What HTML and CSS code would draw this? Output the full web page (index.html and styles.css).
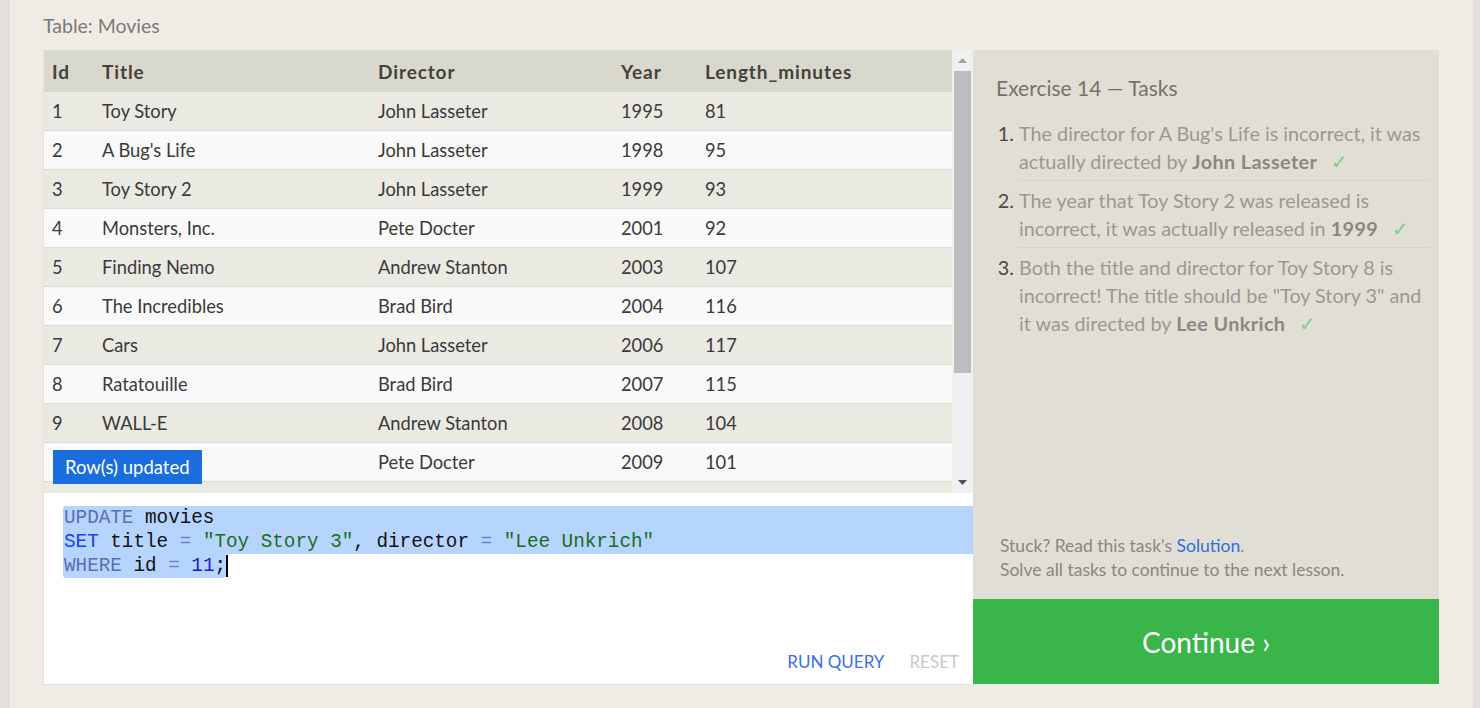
FILE: index.html
```html
<!DOCTYPE html>
<html>
<head>
<meta charset="utf-8">
<link rel="stylesheet" href="styles.css">
</head>
<body>
<div class="page">
  <h2 class="table-title">Table: Movies</h2>
  <div class="main">
    <div class="left">
      <div class="table-view">
        <div class="table-clip">
          <table class="movies">
            <colgroup>
              <col class="c-id"><col class="c-title"><col class="c-dir"><col class="c-year"><col class="c-len">
            </colgroup>
            <thead>
              <tr><th>Id</th><th>Title</th><th>Director</th><th>Year</th><th>Length_minutes</th></tr>
            </thead>
            <tbody>
              <tr><td>1</td><td>Toy Story</td><td>John Lasseter</td><td>1995</td><td>81</td></tr>
              <tr><td>2</td><td>A Bug's Life</td><td>John Lasseter</td><td>1998</td><td>95</td></tr>
              <tr><td>3</td><td>Toy Story 2</td><td>John Lasseter</td><td>1999</td><td>93</td></tr>
              <tr><td>4</td><td>Monsters, Inc.</td><td>Pete Docter</td><td>2001</td><td>92</td></tr>
              <tr><td>5</td><td>Finding Nemo</td><td>Andrew Stanton</td><td>2003</td><td>107</td></tr>
              <tr><td>6</td><td>The Incredibles</td><td>Brad Bird</td><td>2004</td><td>116</td></tr>
              <tr><td>7</td><td>Cars</td><td>John Lasseter</td><td>2006</td><td>117</td></tr>
              <tr><td>8</td><td>Ratatouille</td><td>Brad Bird</td><td>2007</td><td>115</td></tr>
              <tr><td>9</td><td>WALL-E</td><td>Andrew Stanton</td><td>2008</td><td>104</td></tr>
              <tr><td>10</td><td>Up</td><td>Pete Docter</td><td>2009</td><td>101</td></tr>
              <tr class="peek"><td></td><td></td><td></td><td></td><td></td></tr>
            </tbody>
          </table>
        </div>
        <div class="scrollbar">
          <div class="sb-btn"><svg width="9" height="5" viewBox="0 0 9 5"><path d="M0 5 L4.5 0 L9 5 Z" fill="#a3a3a3"/></svg></div>
          <div class="sb-track"><div class="sb-thumb"></div></div>
          <div class="sb-btn"><svg width="9" height="5" viewBox="0 0 9 5"><path d="M0 0 L9 0 L4.5 5 Z" fill="#505050"/></svg></div>
        </div>
        <div class="toast">Row(s) updated</div>
      </div>
      <div class="editor">
        <div class="code">
          <div class="line sel sel-first"><span class="kw-a">UPDATE</span> movies</div>
          <div class="line sel"><span class="kw-b">SET</span> title <span class="op">=</span> <span class="str">"Toy Story 3"</span>, director <span class="op">=</span> <span class="str">"Lee Unkrich"</span></div>
          <div class="line"><span class="sel-part"><span class="kw-a">WHERE</span> id <span class="op">=</span> <span class="num">11</span>;</span><span class="cursor"></span></div>
        </div>
        <div class="actions">
          <span class="run">RUN QUERY</span>
          <span class="reset">RESET</span>
        </div>
      </div>
    </div>
    <div class="right">
      <div class="tasks">
        <h3 class="tasks-title">Exercise 14 — Tasks</h3>
        <ol class="task-list">
          <li>The director for A Bug's Life is incorrect, it was actually directed by <b>John Lasseter</b><span class="check">✓</span></li>
          <li>The year that Toy Story 2 was released is incorrect, it was actually released in <b>1999</b><span class="check">✓</span></li>
          <li>Both the title and director for Toy Story 8 is incorrect! The title should be "Toy Story 3" and it was directed by <b>Lee Unkrich</b><span class="check">✓</span></li>
        </ol>
      </div>
      <div class="help">
        <div>Stuck? Read this task's <span class="link">Solution</span>.</div>
        <div>Solve all tasks to continue to the next lesson.</div>
      </div>
      <div class="continue">Continue ›</div>
    </div>
  </div>
</div>
</body>
</html>
```
FILE: styles.css
```css
html, body {
  margin: 0;
  height: 100%;
}
body {
  background: #e3e0dc;
  font-family: Lato, "Open Sans", sans-serif;
}
.page {
  margin: 0 7px 0 10px;
  height: 708px;
  box-sizing: border-box;
  padding: 14px 33px 0;
  background: #efece5;
}
.table-title {
  margin: 0 0 12px;
  font-size: 19.5px;
  line-height: 24px;
  font-weight: normal;
  color: #7d7a76;
}
.main {
  display: flex;
}
.left {
  width: 930px;
  box-sizing: border-box;
  border-left: 1px solid #e2e0d8;
  display: flex;
  flex-direction: column;
}
.table-view {
  position: relative;
  height: 443px;
  display: flex;
}
.table-clip {
  flex: 1;
  overflow: hidden;
}
.movies {
  width: 100%;
  border-collapse: collapse;
  table-layout: fixed;
  font-size: 18.3px;
  color: #3a3a3a;
}
.c-id { width: 50px; }
.c-title { width: 276px; }
.c-dir { width: 243px; }
.c-year { width: 84px; }
.movies th {
  height: 42px;
  padding: 0 0 0 8px;
  text-align: left;
  font-size: 19px;
  letter-spacing: 0.9px;
  font-weight: bold;
  color: #444240;
  background: #d9d8cc;
}
.movies td {
  height: 38px;
  padding: 0 0 0 8px;
  border-bottom: 1px solid #dddcd5;
  white-space: nowrap;
}
.movies tbody tr:nth-child(odd) td { background: #eae9e2; }
.movies tbody tr:nth-child(even) td { background: #f9f9f9; }
.scrollbar {
  width: 21px;
  background: #f0f0f0;
  display: flex;
  flex-direction: column;
}
.sb-btn {
  height: 21px;
  display: flex;
  align-items: center;
  justify-content: center;
}
.sb-track {
  flex: 1;
}
.sb-thumb {
  margin: 0 2px;
  height: 302px;
  background: #bdbdbd;
}
.toast {
  position: absolute;
  left: 9px;
  top: 400px;
  height: 34px;
  line-height: 34px;
  padding: 0 12px;
  background: #1a6ddc;
  color: #fff;
  font-size: 18.5px;
}
.editor {
  height: 192px;
  box-sizing: border-box;
  background: #fff;
  border-bottom: 1px solid #e2e0d8;
  padding-top: 13px;
  display: flex;
  flex-direction: column;
}
.code {
  flex: 1;
  font-family: "Liberation Mono", "DejaVu Sans Mono", monospace;
  font-size: 19.3px;
  line-height: 24px;
  color: #111;
}
.line {
  margin-left: 19px;
  padding-left: 1px;
  white-space: pre;
  height: 24px;
}
.sel { background: #b5d5ff; }
.sel-first { border-top-left-radius: 3px; }
.sel-part {
  background: #b5d5ff;
  display: inline-block;
  margin-left: -1px;
  padding-left: 1px;
  border-bottom-left-radius: 3px;
  border-bottom-right-radius: 3px;
}
.cursor {
  display: inline-block;
  width: 2px;
  height: 22px;
  background: #000;
  vertical-align: top;
  margin-top: 1px;
}
.kw-a { color: #5c6db5; }
.kw-b { color: #1b3df0; }
.op { color: #6f82d4; }
.str { color: #1a6e1a; }
.num { color: #1c1cc8; }
.actions {
  display: flex;
  justify-content: flex-end;
  gap: 25px;
  padding: 0 14px 10px 0;
  font-size: 17px;
  line-height: 24px;
}
.run { color: #3a6ee8; }
.reset { color: #c9c9c9; }
.right {
  width: 466px;
  height: 634px;
  background: #e1dfd5;
  display: flex;
  flex-direction: column;
}
.tasks {
  flex: 1;
  padding: 24px 10px 0 23px;
}
.tasks-title {
  margin: 0;
  font-size: 21px;
  line-height: 28px;
  font-weight: normal;
  color: #75726d;
}
.task-list {
  margin: 12px 0 0;
  padding-left: 23px;
  font-size: 19.8px;
  line-height: 28px;
  color: #9b9893;
}
.task-list li {
  padding: 5px 0;
  border-bottom: 1px solid #d6d4ca;
}
.task-list li:last-child { border-bottom: none; }
.task-list li::marker { color: #4a4845; }
.task-list b {
  color: #8a8782;
  letter-spacing: 0.4px;
}
.check {
  color: #7fce88;
  margin-left: 14px;
}
.help {
  padding: 0 27px 17px;
  font-size: 17.5px;
  line-height: 24px;
  color: #8b8680;
}
.link { color: #2f6fe0; }
.continue {
  height: 85px;
  background: #3ab54a;
  color: #fff;
  font-size: 28px;
  display: flex;
  align-items: center;
  justify-content: center;
}
```
